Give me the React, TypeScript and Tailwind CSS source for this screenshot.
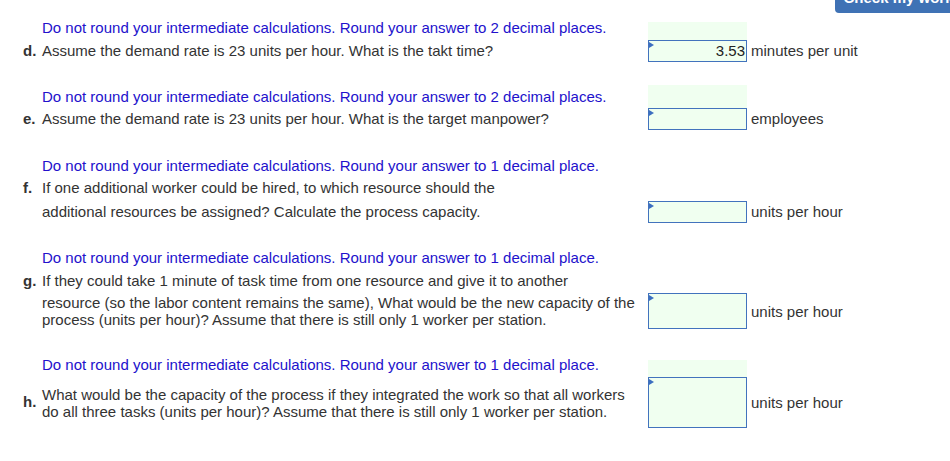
import React from 'react';

const BLUE = 'text-[#2211cc]';

function Label({ children }: { children?: React.ReactNode }) {
  return <div className="w-[19px] shrink-0 font-bold text-[#333]">{children}</div>;
}

function Answer({ h, value }: { h: string; value?: string }) {
  return (
    <div className={`relative w-[99px] ${h} shrink-0 border border-[#4273bd] bg-[#f0fff0] flex items-center justify-end pr-[1px] text-[#222]`}>
      <span className="absolute left-0 top-0 w-0 h-0 border-y-[3px] border-y-transparent border-l-[5px] border-l-[#3c6fc0] mt-[1px]" />
      {value}
    </div>
  );
}

export default function App() {
  return (
    <div className="relative w-[950px] h-[461px] overflow-hidden bg-white font-['Liberation_Sans',Arial,sans-serif] text-[15px] text-[#333]">
      <button className="absolute top-[-17px] right-[-12px] w-[127px] h-[30px] rounded-[4px] bg-[#3f72b5] text-white text-[15px] font-bold whitespace-nowrap">
        Check my work
      </button>

      {/* d */}
      <div className="flex items-start mt-[19px] h-[21px] pl-[23px]">
        <Label />
        <div className={`w-[606px] leading-[18px] ${BLUE}`}>Do not round your intermediate calculations. Round your answer to 2 decimal places.</div>
        <div className="w-[99px] h-[18px] mt-[3px] bg-[#f0fff0]" />
      </div>
      <div className="flex items-center h-[22px] pl-[23px]">
        <Label>d.</Label>
        <div className="w-[606px] leading-[18px]">Assume the demand rate is 23 units per hour. What is the takt time?</div>
        <Answer h="h-[22px]" value="3.53" />
        <div className="ml-[4px]">minutes per unit</div>
      </div>

      {/* e */}
      <div className="flex items-center mt-[23px] h-[23px] pl-[23px]">
        <Label />
        <div className={`w-[606px] leading-[18px] ${BLUE}`}>Do not round your intermediate calculations. Round your answer to 2 decimal places.</div>
        <div className="w-[99px] h-[23px] bg-[#f0fff0]" />
      </div>
      <div className="flex items-center h-[22px] pl-[23px]">
        <Label>e.</Label>
        <div className="w-[606px] leading-[18px]">Assume the demand rate is 23 units per hour. What is the target manpower?</div>
        <Answer h="h-[22px]" />
        <div className="ml-[4px] mt-[1px]">employees</div>
      </div>

      {/* f */}
      <div className="flex items-center mt-[27px] h-[18px] pl-[23px]">
        <Label />
        <div className={`w-[606px] leading-[18px] ${BLUE}`}>Do not round your intermediate calculations. Round your answer to 1 decimal place.</div>
      </div>
      <div className="flex items-center mt-[4px] h-[18px] pl-[23px]">
        <Label>f.</Label>
        <div className="w-[606px] leading-[18px]">If one additional worker could be hired, to which resource should the</div>
      </div>
      <div className="flex items-center mt-[4px] h-[22px] pl-[23px]">
        <Label />
        <div className="w-[606px] leading-[18px]">additional resources be assigned? Calculate the process capacity.</div>
        <Answer h="h-[22px]" />
        <div className="ml-[4px]">units per hour</div>
      </div>

      {/* g */}
      <div className="flex items-center mt-[26px] h-[18px] pl-[23px]">
        <Label />
        <div className={`w-[606px] leading-[18px] ${BLUE}`}>Do not round your intermediate calculations. Round your answer to 1 decimal place.</div>
      </div>
      <div className="flex items-center mt-[5px] h-[18px] pl-[23px]">
        <Label>g.</Label>
        <div className="w-[606px] leading-[18px]">If they could take 1 minute of task time from one resource and give it to another</div>
      </div>
      <div className="flex items-center mt-[3px] h-[36px] pl-[23px]">
        <Label />
        <div className="w-[606px] leading-[17px] whitespace-nowrap">
          resource (so the labor content remains the same), What would be the new capacity of the
          <br />
          process (units per hour)? Assume that there is still only 1 worker per station.
        </div>
        <Answer h="h-[36px]" />
        <div className="ml-[4px] mt-[3px]">units per hour</div>
      </div>

      {/* h */}
      <div className="flex items-start mt-[27px] h-[21px] pl-[23px]">
        <Label />
        <div className={`w-[606px] leading-[18px] ${BLUE}`}>Do not round your intermediate calculations. Round your answer to 1 decimal place.</div>
        <div className="w-[99px] h-[17px] mt-[4px] bg-[#f0fff0]" />
      </div>
      <div className="flex items-center h-[51px] pl-[23px]">
        <Label>h.</Label>
        <div className="w-[606px] leading-[17px] whitespace-nowrap">
          What would be the capacity of the process if they integrated the work so that all workers
          <br />
          do all three tasks (units per hour)? Assume that there is still only 1 worker per station.
        </div>
        <Answer h="h-[51px]" />
        <div className="ml-[4px] mt-[2px]">units per hour</div>
      </div>
    </div>
  );
}
